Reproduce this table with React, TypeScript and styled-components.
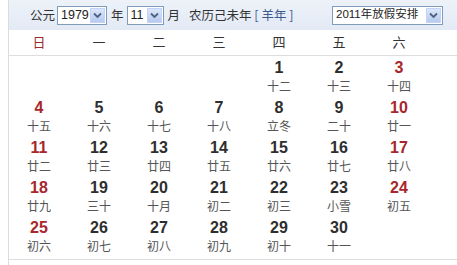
import styled, { createGlobalStyle } from "styled-components";

const GlobalStyle = createGlobalStyle`
  html, body {
    margin: 0;
    padding: 0;
    background: #ffffff;
  }
  body {
    font-family: "Noto Sans CJK SC", "Liberation Sans", sans-serif;
    color: #333333;
  }
`;

type Day = { n: number; lunar: string; red: boolean };

const lunar = [
  "十二", "十三", "十四", "十五", "十六", "十七", "十八", "立冬", "二十", "廿一",
  "廿二", "廿三", "廿四", "廿五", "廿六", "廿七", "廿八", "廿九", "三十", "十月",
  "初二", "初三", "小雪", "初五", "初六", "初七", "初八", "初九", "初十", "十一",
];

// 1979-11-01 is a Thursday
const firstWeekday = 4;
const cells: (Day | null)[] = [];
for (let i = 0; i < firstWeekday; i++) cells.push(null);
for (let d = 1; d <= 30; d++) {
  const col = (firstWeekday + d - 1) % 7;
  cells.push({ n: d, lunar: lunar[d - 1], red: col === 0 || col === 6 });
}

const weekdays = ["日", "一", "二", "三", "四", "五", "六"];

const Arrow = () => (
  <svg width="9" height="7" viewBox="0 0 9 7">
    <path d="M1 1.5 L4.5 5 L8 1.5" fill="none" stroke="#4d6185" strokeWidth="1.8" />
  </svg>
);

const App = (): JSX.Element => {
  return (
    <>
      <GlobalStyle />
      <Calendar>
        <Toolbar>
          <Label>公元</Label>
          <Select $width={50}>
            <span>1979</span>
            <SelectButton>
              <Arrow />
            </SelectButton>
          </Select>
          <Label>年</Label>
          <Select $width={37}>
            <span>11</span>
            <SelectButton>
              <Arrow />
            </SelectButton>
          </Select>
          <Label>月</Label>
          <LunarInfo>
            农历己未年 <Zodiac>[ 羊年 ]</Zodiac>
          </LunarInfo>
          <Spacer />
          <Select $width={111} $size={11.5}>
            <span>2011年放假安排</span>
            <SelectButton>
              <Arrow />
            </SelectButton>
          </Select>
        </Toolbar>
        <WeekRow>
          {weekdays.map((w, i) => (
            <WeekCell key={w} $red={i === 0}>
              {w}
            </WeekCell>
          ))}
        </WeekRow>
        <DayGrid>
          {cells.map((c, i) =>
            c ? (
              <DayCell key={i}>
                <DayNumber $red={c.red}>{c.n}</DayNumber>
                <LunarText>{c.lunar}</LunarText>
              </DayCell>
            ) : (
              <DayCell key={i} />
            )
          )}
        </DayGrid>
      </Calendar>
    </>
  );
};

const Calendar = styled.div`
  margin-left: 8px;
  width: 449px;
  height: 265px;
  border-left: 1px solid #dcdcdc;
  box-sizing: border-box;
  display: flex;
  flex-direction: column;
  overflow: hidden;
`;

const Toolbar = styled.div`
  height: 30px;
  display: flex;
  align-items: center;
  padding: 0 12px 0 21px;
  background: linear-gradient(#edf2f9, #e3eaf5);
  font-size: 12.5px;
  color: #333333;
  box-sizing: border-box;
`;

const Label = styled.span`
  margin: 0 3px 0 2px;
  line-height: 1;
  &:first-child {
    margin-left: 0;
    margin-right: 2px;
  }
`;

const Select = styled.div<{ $width: number; $size?: number }>`
  width: ${(p) => p.$width}px;
  height: 19px;
  box-sizing: border-box;
  border: 1px solid #7f9db9;
  background: #ffffff;
  display: flex;
  align-items: center;
  justify-content: space-between;
  padding-left: 3px;
  margin-right: 2px;
  font-size: ${(p) => p.$size ?? 12.5}px;
  font-family: "Liberation Sans", "Noto Sans CJK SC", sans-serif;
  color: #222222;
  white-space: nowrap;

  span {
    line-height: 1;
  }
`;

const SelectButton = styled.div`
  flex: none;
  width: 15px;
  height: 15px;
  margin-right: 1px;
  background: linear-gradient(#dbe6f8, #b7cbee);
  border: 1px solid #c3d3fd;
  box-sizing: border-box;
  display: flex;
  align-items: center;
  justify-content: center;
`;

const LunarInfo = styled.span`
  margin-left: 6px;
  line-height: 1;
`;

const Zodiac = styled.span`
  color: #3d5b8f;
`;

const Spacer = styled.div`
  flex: 1;
`;

const WeekRow = styled.div`
  height: 26px;
  display: grid;
  grid-template-columns: repeat(7, 60px);
  align-items: center;
  border-bottom: 1px solid #dddddd;
  box-sizing: border-box;
  padding-bottom: 2px;
`;

const WeekCell = styled.div<{ $red: boolean }>`
  text-align: center;
  font-size: 13px;
  color: ${(p) => (p.$red ? "#9c2b2b" : "#333333")};
`;

const DayGrid = styled.div`
  display: grid;
  grid-template-columns: repeat(7, 60px);
  grid-auto-rows: 40px;
  padding-top: 1px;
  padding-bottom: 2px;
  border-bottom: 1px solid #dddddd;
  width: 448px;
`;

const DayCell = styled.div`
  display: flex;
  flex-direction: column;
  align-items: center;
  padding-top: 2px;
  box-sizing: border-box;
`;

const DayNumber = styled.div<{ $red: boolean }>`
  font-family: "Liberation Sans", Arial, sans-serif;
  font-weight: bold;
  font-size: 16px;
  line-height: 18px;
  color: ${(p) => (p.$red ? "#a8262d" : "#2e2e2e")};
`;

const LunarText = styled.div`
  font-size: 12px;
  line-height: 18px;
  color: #555555;
`;

export default App;
